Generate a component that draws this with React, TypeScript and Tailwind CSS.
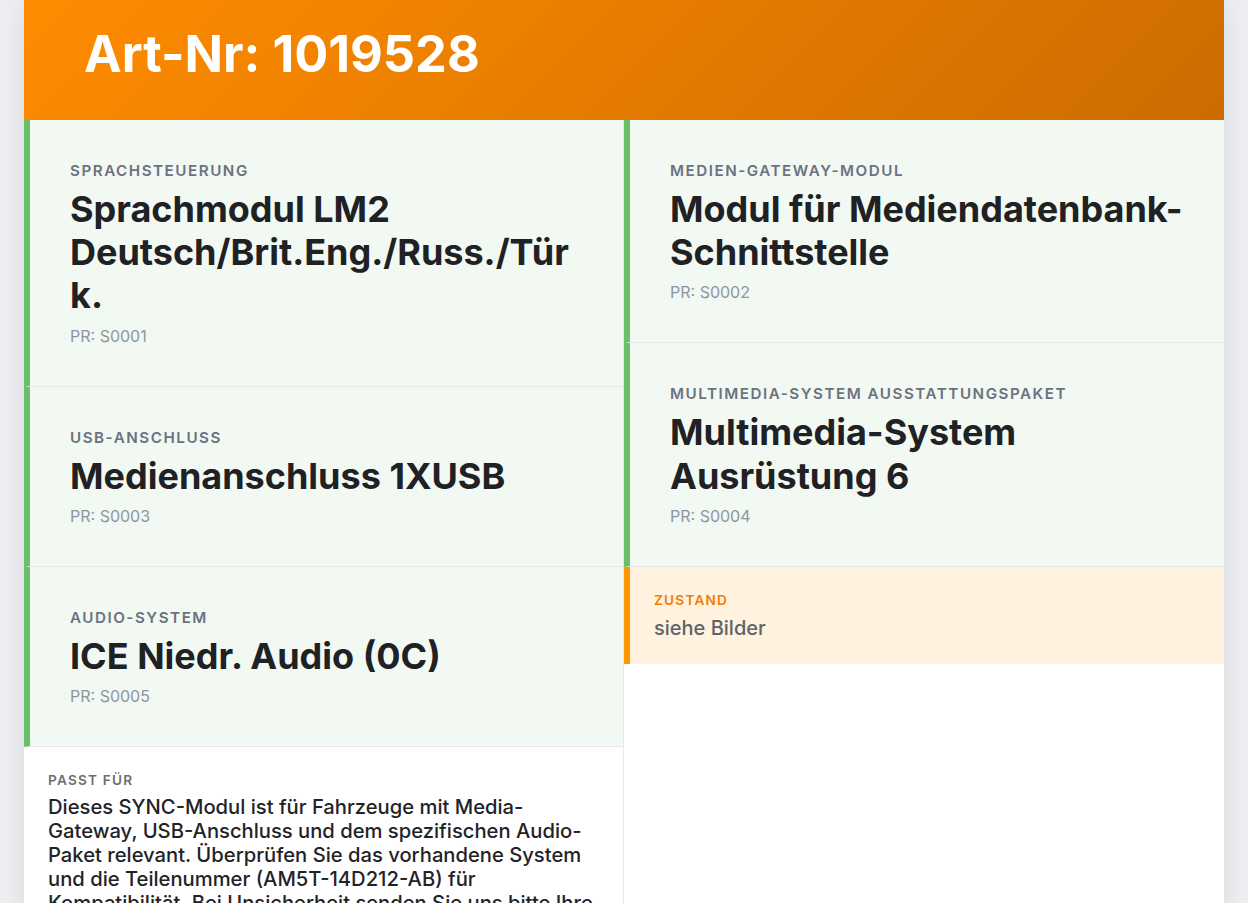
import React from 'react'

type Feature = { label: string; title: string; pr: string }

const leftFeatures: Feature[] = [
  { label: 'Sprachsteuerung', title: 'Sprachmodul LM2 Deutsch/Brit.Eng./Russ./Türk.', pr: 'S0001' },
  { label: 'USB-Anschluss', title: 'Medienanschluss 1XUSB', pr: 'S0003' },
  { label: 'Audio-System', title: 'ICE Niedr. Audio (0C)', pr: 'S0005' },
]

const rightFeatures: Feature[] = [
  { label: 'Medien-Gateway-Modul', title: 'Modul für Mediendatenbank-Schnittstelle', pr: 'S0002' },
  { label: 'Multimedia-System Ausstattungspaket', title: 'Multimedia-System Ausrüstung 6', pr: 'S0004' },
]

function FeatureCard({ f }: { f: Feature }) {
  return (
    <div className="bg-[#f2f8f2] border-l-[6px] border-[#6abf69] border-b border-b-[#e5e7eb] px-10 pt-[41px] pb-10">
      <div className="text-[15.2px] leading-5 font-semibold uppercase tracking-[0.1em] text-[#6b7280]">{f.label}</div>
      <div className="mt-[7px] text-[36px] leading-[1.2] font-bold text-[#202124] break-words">{f.title}</div>
      <div className="mt-2 text-[16px] leading-5 text-[#8d96a0]">PR: {f.pr}</div>
    </div>
  )
}

export default function App() {
  return (
    <div className="min-h-screen bg-[#eceef1] px-6 font-['Inter',sans-serif]">
      <div className="bg-white shadow-[0_0_24px_rgba(0,0,0,0.08)] min-h-[903px]">
        <header className="h-[120px] pt-[29px] pl-[60px] bg-[linear-gradient(135deg,#ff8c00,#cc6c00)]">
          <h1 className="text-[50.5px] leading-none font-bold text-white">Art-Nr: 1019528</h1>
        </header>

        <div className="flex">
          <div className="w-[600px] border-r border-[#e5e7eb]">
            {leftFeatures.map((f) => (
              <FeatureCard key={f.pr} f={f} />
            ))}
            <div className="px-6 pt-6 pb-6">
              <div className="text-[13.6px] leading-[18px] font-semibold uppercase tracking-[0.09em] text-[#6b6f75]">Passt für</div>
              <p className="mt-1.5 text-[20.2px] leading-6 font-medium text-[#1f2328]">
                Dieses SYNC-Modul ist für Fahrzeuge mit Media-Gateway, USB-Anschluss und dem spezifischen Audio-Paket
                relevant. Überprüfen Sie das vorhandene System und die Teilenummer (AM5T-14D212-AB) für Kompatibilität.
                Bei Unsicherheit senden Sie uns bitte Ihre Fahrgestellnummer.
              </p>
            </div>
          </div>

          <div className="flex-1">
            {rightFeatures.map((f) => (
              <FeatureCard key={f.pr} f={f} />
            ))}
            <div className="bg-[#fff2df] border-l-[6px] border-[#ff9800] px-6 pt-6 pb-[22px]">
              <div className="text-[13.6px] leading-[18px] font-semibold uppercase tracking-[0.09em] text-[#f57c00]">Zustand</div>
              <div className="mt-[6px] text-[20px] leading-[27px] font-medium text-[#5f6368]">siehe Bilder</div>
            </div>
          </div>
        </div>
      </div>
    </div>
  )
}
